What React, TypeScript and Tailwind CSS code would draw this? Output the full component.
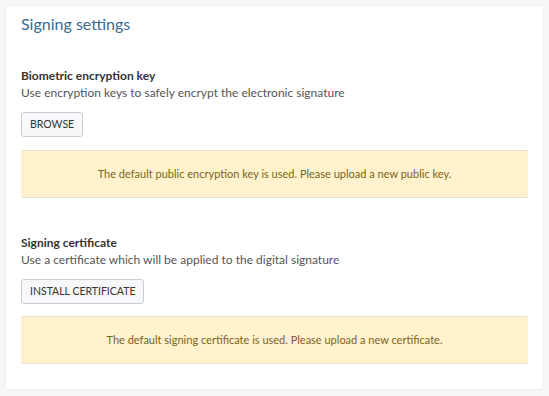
import React from "react";

function Alert({ children }: { children: React.ReactNode }) {
  return (
    <div className="mt-[13px] h-[48px] flex items-center justify-center rounded-[2px] bg-[#fff2cc] border-t border-b border-t-[#e6dfc8] border-b-[#e3e0d6] text-[11px] text-[#7a6420]">
      {children}
    </div>
  );
}

function Btn({ children }: { children: React.ReactNode }) {
  return (
    <button className="mt-[11px] h-[25px] px-[8px] rounded-[3px] border border-[#c9cdd2] bg-[#f7f8f9] text-[10.5px] text-[#333] leading-none">
      {children}
    </button>
  );
}

export default function App() {
  return (
    <div
      className="w-[549px] h-[396px] bg-[#f7f7f7] p-[6px] pb-[7px]"
      style={{ fontFamily: "Lato, 'Liberation Sans', sans-serif" }}
    >
      <div className="h-full bg-white shadow-[0_0_3px_rgba(0,0,0,0.06)] pt-[6px] pl-[15px] pr-[15px] flex flex-col">
        <h1 className="text-[16px] leading-[24px] text-[#3b6b91]">Signing settings</h1>

        <div className="mt-[31px] flex flex-col items-start">
          <div className="text-[12px] leading-[17px] font-bold text-[#333]">Biometric encryption key</div>
          <div className="text-[12px] leading-[17px] text-[#555]">
            Use encryption keys to safely encrypt the electronic signature
          </div>
          <Btn>BROWSE</Btn>
        </div>
        <Alert>The default public encryption key is used. Please upload a new public key.</Alert>

        <div className="mt-[36px] flex flex-col items-start">
          <div className="text-[12px] leading-[17px] font-bold text-[#333]">Signing certificate</div>
          <div className="text-[12px] leading-[17px] text-[#555]">
            Use a certificate which will be applied to the digital signature
          </div>
          <Btn>INSTALL CERTIFICATE</Btn>
        </div>
        <div className="-mt-px">
          <Alert>The default signing certificate is used. Please upload a new certificate.</Alert>
        </div>
      </div>
    </div>
  );
}
